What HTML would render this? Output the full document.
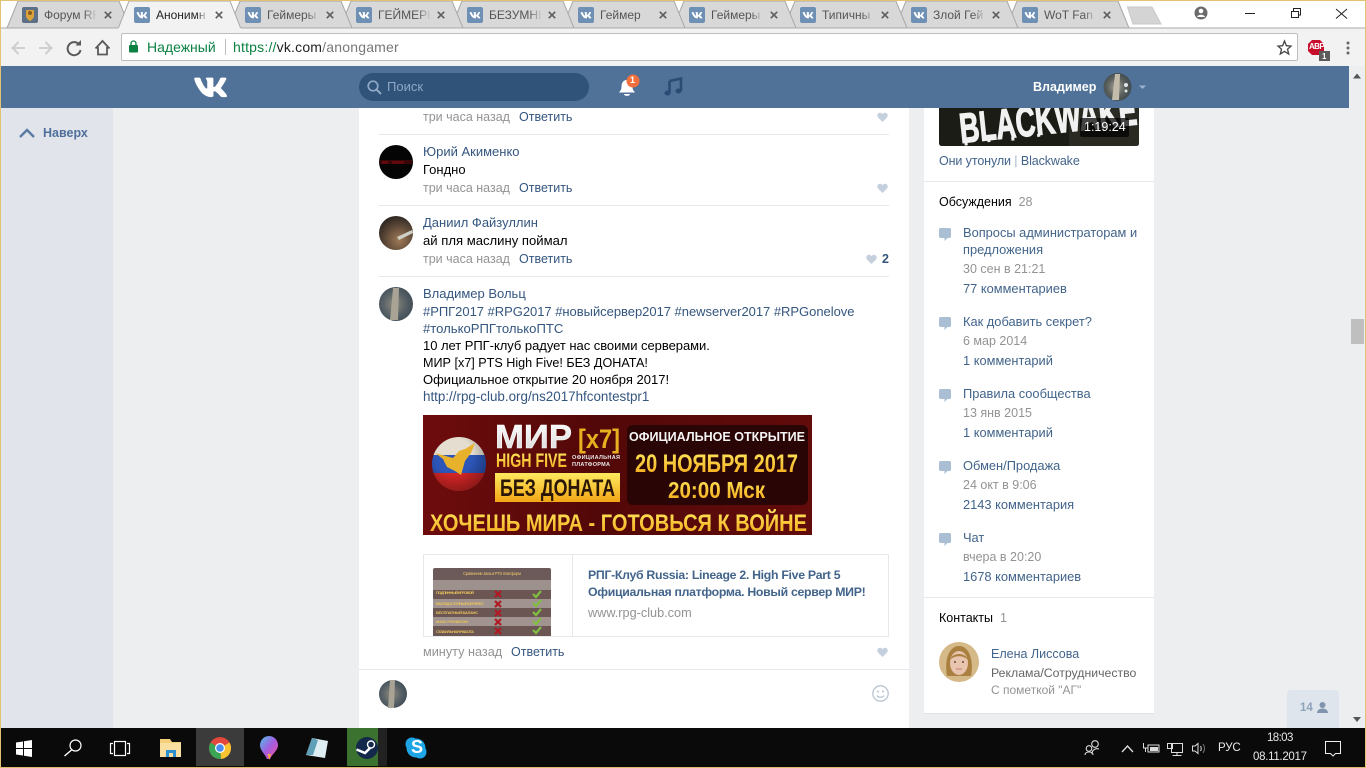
<!DOCTYPE html>
<html><head><meta charset="utf-8"><title>vk</title>
<style>
html,body{margin:0;padding:0;width:1366px;height:768px;overflow:hidden;background:#edeef0}
body{position:relative;font-family:"Liberation Sans","Noto Sans CJK SC",sans-serif;font-size:12.5px;color:#000}
.a{position:absolute}
.t{position:absolute;white-space:nowrap;line-height:17px;height:17px;margin-top:1px}
.l{color:#34567f}.g{color:#939393}.m{color:#42648b}.b{font-weight:bold}
.c{font-size:13px;margin-top:0}.s{font-size:12.85px;margin-top:0}
.tab{position:absolute;top:7px;font-size:12px;line-height:16px;color:#555;width:53px;overflow:hidden;white-space:nowrap;-webkit-mask-image:linear-gradient(90deg,#000 75%,transparent);mask-image:linear-gradient(90deg,#000 75%,transparent)}
.hr{position:absolute;height:1px;background:#e7e8ec}
svg{position:absolute;overflow:visible}
</style></head><body>

<!-- page columns -->
<div class="a" style="left:0;top:108px;width:113px;height:620px;background:#e1e5eb"></div>
<div class="a" style="left:359px;top:108px;width:550px;height:620px;background:#fff"></div>
<div class="a" style="left:924px;top:108px;width:230px;height:605px;background:#fff;box-shadow:0 1px 0 #dfe2e8"></div>

<!-- Tab strip -->
<div class="a" style="left:0;top:0;width:1366px;height:28px;background:#fff"></div>
<svg style="left:0;top:0" width="1366" height="66">
<defs>
<symbol id="vk" viewBox="0 0 16 16"><rect width="16" height="16" rx="2" fill="#6f90b5"/><path transform="scale(.667)" fill="#fff" d="M19.376 17.123h-1.744c-.66 0-.864-.525-2.05-1.727-1.033-1-1.49-1.135-1.744-1.135-.356 0-.458.102-.458.593v1.575c0 .424-.135.678-1.253.678-1.846 0-3.896-1.118-5.335-3.202C4.624 10.857 4.03 8.57 4.03 8.096c0-.254.102-.491.593-.491h1.744c.44 0 .61.203.78.677.863 2.49 2.303 4.675 2.896 4.675.22 0 .322-.102.322-.66V9.721c-.068-1.186-.695-1.287-.695-1.71 0-.204.17-.407.44-.407h2.743c.373 0 .508.203.508.643v3.473c0 .372.17.508.271.508.22 0 .407-.136.813-.542 1.254-1.406 2.151-3.574 2.151-3.574.119-.254.322-.491.763-.491h1.744c.525 0 .644.27.525.643-.22 1.017-2.354 4.031-2.354 4.031-.186.305-.254.44 0 .78.186.254.796.779 1.203 1.253.745.847 1.32 1.558 1.473 2.05.17.49-.085.744-.576.744z"/></symbol>
<symbol id="x" viewBox="0 0 10 10"><path d="M1 1L9 9M9 1L1 9" stroke="#5f5f5f" stroke-width="2.100" fill="none"/></symbol>
</defs>
<g fill="#d8d8d8" stroke="#a8a8a8">
<path d="M1006 28L1017 1H1118L1129 28Z"/>
<path d="M895 28L906 1H1007L1018 28Z"/>
<path d="M784 28L795 1H896L907 28Z"/>
<path d="M673 28L684 1H785L796 28Z"/>
<path d="M562 28L573 1H674L685 28Z"/>
<path d="M451 28L462 1H563L574 28Z"/>
<path d="M340 28L351 1H452L463 28Z"/>
<path d="M229 28L240 1H341L352 28Z"/>
<path d="M7 28L18 1H119L130 28Z"/>
</g>
<path d="M0 28H1366" stroke="#a9a9a9"/>
<path d="M1127.500 7H1152L1161 24H1133Z" fill="#d4d4d4" stroke="#c8c8c8"/>
<path d="M118 29L129 1H230L241 29Z" fill="#f2f2f2" stroke="#a8a8a8"/>
<rect x="0" y="28" width="1366" height="38" fill="#f2f2f2"/>
<path d="M0 28H118M241 28H1366" stroke="#a9a9a9"/>
<rect x="22" y="7" width="16" height="16" rx="2" fill="#5d6f86"/><path d="M26 10H34V16C34 19 30 21 30 21S26 19 26 16Z" fill="#d8a43a"/><circle cx="30" cy="13" r="2" fill="#8c5a20"/>
<use href="#vk" x="134" y="7" width="16" height="16"/><use href="#vk" x="245" y="7" width="16" height="16"/><use href="#vk" x="356" y="7" width="16" height="16"/><use href="#vk" x="467" y="7" width="16" height="16"/><use href="#vk" x="578" y="7" width="16" height="16"/><use href="#vk" x="689" y="7" width="16" height="16"/><use href="#vk" x="800" y="7" width="16" height="16"/><use href="#vk" x="911" y="7" width="16" height="16"/><use href="#vk" x="1022" y="7" width="16" height="16"/>
<use href="#x" x="104" y="11" width="8" height="8"/><use href="#x" x="215" y="11" width="8" height="8"/><use href="#x" x="326" y="11" width="8" height="8"/><use href="#x" x="437" y="11" width="8" height="8"/><use href="#x" x="548" y="11" width="8" height="8"/><use href="#x" x="659" y="11" width="8" height="8"/><use href="#x" x="770" y="11" width="8" height="8"/><use href="#x" x="881" y="11" width="8" height="8"/><use href="#x" x="992" y="11" width="8" height="8"/><use href="#x" x="1103" y="11" width="8" height="8"/>
<circle cx="1201" cy="13" r="6.500" fill="#6b6b6b"/><circle cx="1201" cy="11" r="2.300" fill="#fff"/><path d="M1197 17C1198 14 1204 14 1205 17Z" fill="#fff"/>
<path d="M1245 13.500H1255" stroke="#222"/>
<path d="M1291.500 11.500H1298.500V17.500H1291.500ZM1293.500 11V8.500H1300.500V15H1298.500" fill="none" stroke="#222"/>
<path d="M1336 9L1347 18.500M1347 9L1336 18.500" stroke="#222"/>
<g fill="none" stroke="#cfcfcf" stroke-width="2"><path d="M25 48H13M18.500 42L12.500 48L18.500 54"/><path d="M39 48H51M45.500 42L51.500 48L45.500 54"/></g>
<path d="M79.500 45A6.500 6.500 0 1 0 80.500 50" fill="none" stroke="#5a5a5a" stroke-width="2"/><path d="M75.500 45.500H81V40Z" fill="#5a5a5a"/>
<path d="M95.500 48.500L102.500 41L109.500 48.500M98 47V54.500H107V47" fill="none" stroke="#5a5a5a" stroke-width="1.800"/>
</svg>

<!-- omnibox -->
<div class="a" style="left:121px;top:33px;width:1175px;height:26px;background:#fff;border:1px solid #bdbdbd;border-radius:2px"></div>
<svg style="left:0;top:0" width="1366" height="66">
<rect x="129" y="45" width="9" height="7.500" rx="1" fill="#0b8043"/><path d="M131 45.500V43.500A2.500 2.500 0 0 1 136 43.500V45.500" fill="none" stroke="#0b8043" stroke-width="1.300"/>
<path d="M225.500 39V55" stroke="#bdbdbd"/>
<path d="M1284.500 41L1286.400 45.700L1291 46.100L1287.500 49.200L1288.700 54L1284.500 51.400L1280.300 54L1281.500 49.200L1278 46.100L1282.600 45.700Z" fill="none" stroke="#444" stroke-width="1.300"/>
<path d="M1312 40H1320L1324 44V51L1320 55H1312L1308 51V44Z" fill="#c70d2c"/>
</svg>
<div class="t" style="left:1309px;top:37px;font-size:8px;font-weight:bold;color:#fff;letter-spacing:-.6px">ABP</div>
<div class="a" style="left:1319px;top:51px;width:11px;height:10px;background:#5b5b5b"></div>
<div class="t" style="left:1322px;top:47px;font-size:8px;font-weight:bold;color:#fff">1</div>
<svg style="left:0;top:0" width="1366" height="66"><g fill="#666"><circle cx="1348" cy="43" r="1.500"/><circle cx="1348" cy="48" r="1.500"/><circle cx="1348" cy="53" r="1.500"/></g></svg>
<div class="t" style="left:147px;top:38px;font-size:14px;color:#0b8043">Надежный</div>
<div class="t" style="left:233px;top:38px;font-size:14px;letter-spacing:.2px;color:#777"><span style="color:#0b8043">https://</span><span style="color:#222">vk.com</span>/anongamer</div>

<!-- tab text -->
<div class="tab" style="left:44px">Форум RF</div>
<div class="tab" style="left:156px;color:#222">Анонимн</div>
<div class="tab" style="left:267px">Геймеры</div>
<div class="tab" style="left:378px">ГЕЙМЕРЫ</div>
<div class="tab" style="left:489px">БЕЗУМНЫ</div>
<div class="tab" style="left:600px">Геймер</div>
<div class="tab" style="left:711px">Геймеры</div>
<div class="tab" style="left:822px">Типичны</div>
<div class="tab" style="left:933px">Злой Гей</div>
<div class="tab" style="left:1044px">WoT Fan</div>

<!-- VK header -->
<div class="a" style="left:1px;top:66px;width:1348px;height:42px;background:#507299"></div>
<svg style="left:0;top:0" width="1366" height="108">
<path transform="translate(186 62) scale(2.050)" fill="#fff" d="M19.376 17.123h-1.744c-.66 0-.864-.525-2.05-1.727-1.033-1-1.49-1.135-1.744-1.135-.356 0-.458.102-.458.593v1.575c0 .424-.135.678-1.253.678-1.846 0-3.896-1.118-5.335-3.202C4.624 10.857 4.03 8.57 4.03 8.096c0-.254.102-.491.593-.491h1.744c.44 0 .61.203.78.677.863 2.49 2.303 4.675 2.896 4.675.22 0 .322-.102.322-.66V9.721c-.068-1.186-.695-1.287-.695-1.71 0-.204.17-.407.44-.407h2.743c.373 0 .508.203.508.643v3.473c0 .372.17.508.271.508.22 0 .407-.136.813-.542 1.254-1.406 2.151-3.574 2.151-3.574.119-.254.322-.491.763-.491h1.744c.525 0 .644.27.525.643-.22 1.017-2.354 4.031-2.354 4.031-.186.305-.254.44 0 .78.186.254.796.779 1.203 1.253.745.847 1.32 1.558 1.473 2.05.17.49-.085.744-.576.744z"/>
<rect x="359" y="73" width="230" height="28" rx="14" fill="#2f5379"/>
<circle cx="373" cy="86" r="4.800" fill="none" stroke="#8fa7c4" stroke-width="1.700"/><path d="M376.500 89.500L381 94" stroke="#8fa7c4" stroke-width="2"/>
<path d="M627 80C622.500 80 621.500 84 621.500 87C621.500 90 620 91 619 92.500H635C634 91 632.500 90 632.500 87C632.500 84 631.500 80 627 80Z" fill="#fff"/><path d="M624 94H630C630 96.500 624 96.500 624 94Z" fill="#fff"/>
<circle cx="633" cy="81" r="6.500" fill="#f26f3e"/>
<path d="M669.500 81L681 78.500V91" fill="none" stroke="#2a4b73" stroke-width="2.600"/><path d="M669.500 81V93" stroke="#2a4b73" stroke-width="2.600"/>
<ellipse cx="667.500" cy="93" rx="3" ry="2.500" fill="#2a4b73"/><ellipse cx="678.500" cy="91" rx="3" ry="2.500" fill="#2a4b73"/>
<defs><radialGradient id="av" cx=".45" cy=".5" r=".7"><stop offset="0" stop-color="#a8a59a"/><stop offset=".45" stop-color="#5d625f"/><stop offset="1" stop-color="#2f3a42"/></radialGradient></defs>
<circle cx="1117.500" cy="87" r="14" fill="url(#av)"/><path d="M1115 74L1120 74L1119 100L1112 100Z" fill="#c3bcab"/><circle cx="1126" cy="85" r="2" fill="#dfe6ea"/><circle cx="1126" cy="91" r="1.500" fill="#dfe6ea"/>
<path d="M1139 85.500H1146L1142.500 89Z" fill="#9db3cd"/>
<path d="M1353 77.500H1361L1357 72.500Z" fill="#555" transform="translate(0 1)"/>
<path d="M1353 717H1361L1357 722Z" fill="#555"/>
</svg>
<div class="t" style="left:387px;top:77px;font-size:13px;color:#8fa7c4">Поиск</div>
<div class="t" style="left:630px;top:71px;font-size:9px;font-weight:bold;color:#fff">1</div>
<div class="t b" style="left:1033px;top:78px;color:#fff;font-size:12.500px">Владимер</div>

<!-- scrollbar -->
<div class="a" style="left:1349px;top:66px;width:16px;height:662px;background:#f1f1f1;z-index:-1"></div>
<div class="a" style="left:1351px;top:319px;width:13px;height:25px;background:#bfbfbf"></div>

<!-- left -->
<svg style="left:0;top:100px" width="113" height="50"><path d="M20 37L27 30L34 37" fill="none" stroke="#5a7ba3" stroke-width="2.400"/></svg>
<div class="t b" style="left:43px;top:124px;color:#4f6f9a;font-size:12.500px">Наверх</div>

<!-- comments -->
<div class="t g" style="left:423px;top:108px">три часа назад</div><div class="t l" style="left:519px;top:108px">Ответить</div>
<div class="hr" style="left:379px;top:134px;width:510px"></div>

<svg style="left:379px;top:145px" width="34" height="34"><circle cx="17" cy="17" r="17" fill="#050505"/><rect x="1" y="15" width="32" height="4" fill="#3a0709"/><rect x="3" y="16" width="6" height="3" fill="#62090d"/><rect x="13" y="16" width="12" height="3" fill="#62090d"/></svg>
<div class="t l c" style="left:423px;top:143px">Юрий Акименко</div>
<div class="t c" style="left:423px;top:161px">Гондно</div>
<div class="t g" style="left:423px;top:179px">три часа назад</div><div class="t l" style="left:519px;top:179px">Ответить</div>
<div class="hr" style="left:379px;top:205px;width:510px"></div>

<svg style="left:379px;top:216px" width="34" height="34"><defs><radialGradient id="da" cx=".6" cy=".7" r=".7"><stop offset="0" stop-color="#a07a58"/><stop offset="1" stop-color="#2f2722"/></radialGradient></defs><circle cx="17" cy="17" r="17" fill="url(#da)"/><path d="M18 21L33 14L34 17L20 24Z" fill="#cfcfc6"/></svg>
<div class="t l c" style="left:423px;top:214px">Даниил Файзуллин</div>
<div class="t" style="left:423px;top:232px;font-size:13.100px;margin-top:0">ай пля маслину поймал</div>
<div class="t g" style="left:423px;top:250px">три часа назад</div><div class="t l" style="left:519px;top:250px">Ответить</div>
<div class="t l b" style="left:882px;top:250px">2</div>
<div class="hr" style="left:379px;top:276px;width:510px"></div>

<svg style="left:379px;top:287px" width="34" height="34"><defs><radialGradient id="vl" cx=".45" cy=".5" r=".7"><stop offset="0" stop-color="#8f8b7e"/><stop offset=".5" stop-color="#566066"/><stop offset="1" stop-color="#33414b"/></radialGradient></defs><circle cx="17" cy="17" r="17" fill="url(#vl)"/><path d="M14 1L20 1L19 33L11 33Z" fill="#a8a394"/></svg>
<div class="t l c" style="left:423px;top:285px">Владимер Вольц</div>
<div class="t l c" style="left:423px;top:303px;letter-spacing:-.03px">#РПГ2017 #RPG2017 #новыйсервер2017 #newserver2017 #RPGonelove</div>
<div class="t l" style="left:423px;top:320px;font-size:13.100px;margin-top:0">#толькоРПГтолькоПТС</div>
<div class="t c" style="left:423px;top:337px;letter-spacing:-.04px">10 лет РПГ-клуб радует нас своими серверами.</div>
<div class="t" style="left:423px;top:354px;font-size:12.600px">МИР [x7] PTS High Five! БЕЗ ДОНАТА!</div>
<div class="t c" style="left:423px;top:371px">Официальное открытие 20 ноября 2017!</div>
<div class="t l" style="left:423px;top:388px;font-size:13.400px;margin-top:0">http://rpg-club.org/ns2017hfcontestpr1</div>

<!-- hearts -->
<svg style="left:0;top:0" width="1366" height="768">
<defs><path id="h" d="M5.500 10L1 5.500C-.5 3.500 .5 .8 3 .8C4.300 .8 5 1.500 5.500 2.300C6 1.500 6.700 .8 8 .8C10.500 .8 11.500 3.500 10 5.500Z" fill="#c5d0de"/></defs>
<use href="#h" x="877" y="112"/><use href="#h" x="877" y="183"/><use href="#h" x="866" y="254"/><use href="#h" x="877" y="647"/>
</svg>

<!-- Banner -->
<svg style="left:423px;top:415px" width="389" height="120" viewBox="0 0 389 120" font-family="'Liberation Sans',sans-serif" font-weight="bold">
<defs>
<linearGradient id="ban" x1="0" x2="1" y1="0" y2="0"><stop offset="0" stop-color="#6e0c0c"/><stop offset=".45" stop-color="#520808"/><stop offset="1" stop-color="#620b0b"/></linearGradient>
<linearGradient id="yl" x1="0" x2="0" y1="0" y2="1"><stop offset="0" stop-color="#ffe95e"/><stop offset="1" stop-color="#f2a516"/></linearGradient>
<linearGradient id="wh" x1="0" x2="0" y1="0" y2="1"><stop offset="0" stop-color="#fff"/><stop offset="1" stop-color="#d8d8d8"/></linearGradient>
<radialGradient id="gs" cx=".4" cy=".35" r=".7"><stop offset=".5" stop-color="#000" stop-opacity="0"/><stop offset="1" stop-color="#000" stop-opacity=".35"/></radialGradient>
<clipPath id="gl"><circle cx="36" cy="49" r="27"/></clipPath>
</defs>
<rect width="389" height="120" fill="url(#ban)"/>
<g clip-path="url(#gl)"><rect x="9" y="22" width="54" height="18" fill="#e4ddd0"/><rect x="9" y="40" width="54" height="18" fill="#2c55b8"/><rect x="9" y="58" width="54" height="18" fill="#d22525"/><circle cx="36" cy="49" r="27" fill="url(#gs)"/></g>
<path d="M12 38L30 43L36 36L42 34L52 28L48 38L42 46L38 60L32 56L24 52L20 44Z" fill="#e8b12c"/>
<rect x="204" y="10" width="181" height="80" rx="6" fill="#2a0505"/>
<text x="72" y="33" font-size="33" fill="url(#wh)" stroke="#fff" stroke-width=".5" textLength="77" lengthAdjust="spacingAndGlyphs">МИР</text>
<text x="155" y="33" font-size="27" fill="#e8b020" textLength="42" lengthAdjust="spacingAndGlyphs">[x7]</text>
<text x="73" y="52" font-size="19" fill="url(#yl)" textLength="71" lengthAdjust="spacingAndGlyphs">HIGH FIVE</text>
<text x="149" y="44" font-size="5.500" fill="#e8e8e8" textLength="48">ОФИЦИАЛЬНАЯ</text>
<text x="149" y="51" font-size="5.500" fill="#e8e8e8" textLength="38">ПЛАТФОРМА</text>
<rect x="72" y="58" width="125" height="29" fill="url(#yl)"/>
<text x="77" y="81" font-size="24" fill="#2a1605" textLength="115" lengthAdjust="spacingAndGlyphs">БЕЗ ДОНАТА</text>
<text x="206" y="26" font-size="12.500" fill="#f4f4f4" textLength="176" lengthAdjust="spacingAndGlyphs">ОФИЦИАЛЬНОЕ ОТКРЫТИЕ</text>
<text x="212" y="57" font-size="25" fill="url(#yl)" textLength="163" lengthAdjust="spacingAndGlyphs">20 НОЯБРЯ 2017</text>
<text x="245" y="83" font-size="23" fill="url(#yl)" textLength="97" lengthAdjust="spacingAndGlyphs">20:00 Мск</text>
<text x="7" y="116" font-size="24" fill="url(#yl)" textLength="377" lengthAdjust="spacingAndGlyphs">ХОЧЕШЬ МИРА - ГОТОВЬСЯ К ВОЙНЕ</text>
</svg>

<!-- link card -->
<div class="a" style="left:423px;top:554px;width:464px;height:81px;border:1px solid #e7e8ec"></div>
<div class="a" style="left:572px;top:555px;width:1px;height:81px;background:#e7e8ec"></div>
<svg style="left:433px;top:568px" width="118" height="68" viewBox="0 0 118 68" font-family="'Liberation Sans',sans-serif">
<rect width="118" height="68" rx="2" fill="#6c5a5a"/>
<rect y="12" width="118" height="10" fill="#9d918e"/>
<rect y="22" width="118" height="10" fill="#6b5654"/>
<rect y="31" width="118" height="9" fill="#a09390"/>
<rect y="40" width="118" height="9" fill="#6b5654"/>
<rect y="49" width="118" height="9" fill="#a09390"/>
<rect y="58" width="118" height="10" fill="#6b5654"/>
<text x="30" y="7" font-size="4.500" fill="#e5c06a" textLength="58">Сравнение Java и PTS платформ</text>
<g font-size="4" fill="#e9c35a" font-weight="bold"><text x="3" y="26" textLength="38">ПОДЛИННЫЙ ИГРОВОЙ</text><text x="3" y="37" textLength="48">ВАСЯ ДОСТУПНЫЙ ИНТЕРЕС</text><text x="3" y="46" textLength="42">БЕСПЛАТНЫЙ БАЛАНС</text><text x="3" y="55" textLength="32">МАКС PVE/ВАТАН</text><text x="3" y="65" textLength="38">СТАБИЛЬНАЯ РАБОТА</text></g>
<g stroke="#b01a22" stroke-width="2.200"><path d="M62 23L68 29M68 23L62 29M62 33L68 39M68 33L62 39M62 42L68 48M68 42L62 48M62 51L68 57M68 51L62 57M62 60L68 66M68 60L62 66"/></g>
<g fill="none" stroke="#7fc040" stroke-width="2.200"><path d="M100 26L103 29L108 23M100 35L103 38L108 32M100 44L103 47L108 41M100 53L103 56L108 50M100 62L103 65L108 59"/></g>
</svg>
<div class="t m b" style="left:588px;top:566px;font-size:12.300px;letter-spacing:-.3px">РПГ-Клуб Russia: Lineage 2. High Five Part 5</div>
<div class="t m b" style="left:588px;top:583px;font-size:12.300px;letter-spacing:-.3px">Официальная платформа. Новый сервер МИР!</div>
<div class="t g" style="left:588px;top:604px;font-size:12.700px">www.rpg-club.com</div>
<div class="t g" style="left:423px;top:643px;font-size:12.700px">минуту назад</div><div class="t l" style="left:511px;top:643px">Ответить</div>
<div class="hr" style="left:359px;top:669px;width:550px"></div>

<!-- reply -->
<svg style="left:379px;top:680px" width="28" height="28"><circle cx="14" cy="14" r="14" fill="url(#vl)"/><path d="M11 0L16 0L15 28L9 28Z" fill="#a8a394"/></svg>
<svg style="left:872px;top:685px" width="17" height="17"><circle cx="8.500" cy="8.500" r="7.700" fill="none" stroke="#b8c4d2" stroke-width="1.300"/><circle cx="6" cy="6.500" r="1" fill="#b8c4d2"/><circle cx="11" cy="6.500" r="1" fill="#b8c4d2"/><path d="M5 10.500C6.500 12.800 10.500 12.800 12 10.500" fill="none" stroke="#b8c4d2" stroke-width="1.200"/></svg>

<!-- right column -->
<svg style="left:939px;top:108px;overflow:hidden" width="200" height="38" viewBox="0 0 200 38" font-family="'Liberation Sans',sans-serif" font-weight="bold">
<defs><clipPath id="cv"><path d="M0 0H200V35Q200 38 197 38H3Q0 38 0 35Z"/></clipPath></defs>
<g clip-path="url(#cv)"><rect width="200" height="38" fill="#1c1c16"/><rect x="130" width="70" height="38" fill="#2a2a22"/>
<g transform="rotate(-6 22 35)"><text x="22" y="35" font-size="42" fill="#f1f1f1" stroke="#f1f1f1" stroke-width="1.200" textLength="178" lengthAdjust="spacingAndGlyphs">BLACKWAKE</text>
<path d="M27 34V38M50 34V37M74 34V38M100 34V37" stroke="#f1f1f1" stroke-width="3"/></g>
<rect x="141" y="10" width="49" height="19" rx="2" fill="#000" fill-opacity=".72"/></g>
</svg>
<div class="t" style="left:1084px;top:118px;color:#fff;font-size:12.500px">1:19:24</div>
<div class="t m" style="left:939px;top:152px;letter-spacing:-.1px">Они утонули <span style="color:#a8b8c9">|</span> Blackwake</div>
<div class="hr" style="left:924px;top:181px;width:230px"></div>
<div class="t" style="left:939px;top:193px">Обсуждения &nbsp;<span class="g">28</span></div>

<svg style="left:0;top:0" width="1366" height="768">
<defs><path id="c" d="M1.500 0H10.500C11.300 0 12 .7 12 1.500V8.500C12 9.300 11.300 10 10.500 10H8.500L5.500 13V10H1.500C.7 10 0 9.300 0 8.500V1.500C0 .7 .7 0 1.500 0Z" fill="#aabfd4"/></defs>
<use href="#c" x="939" y="228"/><use href="#c" x="939" y="317"/><use href="#c" x="939" y="389"/><use href="#c" x="939" y="461"/><use href="#c" x="939" y="533"/>
</svg>

<div class="t m s" style="left:963px;top:224px">Вопросы администраторам и</div>
<div class="t m s" style="left:963px;top:241px">предложения</div>
<div class="t g" style="left:963px;top:260px">30 сен в 21:21</div>
<div class="t m s" style="left:963px;top:280px">77 комментариев</div>

<div class="t m s" style="left:963px;top:313px">Как добавить секрет?</div>
<div class="t g" style="left:963px;top:332px">6 мар 2014</div>
<div class="t m s" style="left:963px;top:352px">1 комментарий</div>

<div class="t m s" style="left:963px;top:385px">Правила сообщества</div>
<div class="t g" style="left:963px;top:404px">13 янв 2015</div>
<div class="t m s" style="left:963px;top:424px">1 комментарий</div>

<div class="t m s" style="left:963px;top:457px">Обмен/Продажа</div>
<div class="t g" style="left:963px;top:476px">24 окт в 9:06</div>
<div class="t m s" style="left:963px;top:496px">2143 комментария</div>

<div class="t m s" style="left:963px;top:529px">Чат</div>
<div class="t g" style="left:963px;top:548px">вчера в 20:20</div>
<div class="t m s" style="left:963px;top:568px">1678 комментариев</div>

<div class="hr" style="left:924px;top:597px;width:230px"></div>
<div class="t" style="left:939px;top:609px">Контакты &nbsp;<span class="g">1</span></div>
<svg style="left:939px;top:642px" width="40" height="40"><circle cx="20" cy="20" r="20" fill="#d6b988"/><path d="M8 34C5 18 10 4 20 4C30 4 35 18 32 34Z" fill="#a9803f"/><ellipse cx="20" cy="21" rx="9" ry="12" fill="#e9c4ae"/><path d="M11 18C13 10 27 10 29 18C25 13 15 13 11 18Z" fill="#a9803f"/><circle cx="16" cy="20" r="1" fill="#6a4a3a"/><circle cx="24" cy="20" r="1" fill="#6a4a3a"/><path d="M17 27H23" stroke="#c47f72"/></svg>
<div class="t m" style="left:991px;top:645px">Елена Лиссова</div>
<div class="t" style="left:991px;top:664px;color:#656565;font-size:12.300px">Реклама/Сотрудничество</div>
<div class="t g" style="left:991px;top:681px;font-size:12px">С пометкой "АГ"</div>

<!-- friends widget -->
<div class="a" style="left:1287px;top:690px;width:52px;height:38px;background:#dfe5ec;border-radius:4px 4px 0 0"></div>
<div class="t b" style="left:1300px;top:699px;color:#8fa3bb;font-size:11.500px">14</div>
<svg style="left:1317px;top:702px" width="11" height="11"><circle cx="5.500" cy="3" r="3" fill="#8094ad"/><path d="M0 11C0 5 11 5 11 11Z" fill="#8094ad"/></svg>

<!-- window border -->
<div class="a" style="left:0;top:0;width:1366px;height:1px;background:#e3c372"></div>
<div class="a" style="left:0;top:0;width:1px;height:768px;background:#e3c372"></div>
<div class="a" style="left:1365px;top:0;width:1px;height:768px;background:#e3c372"></div>

<!-- Taskbar -->
<div class="a" style="left:1px;top:728px;width:1364px;height:39px;background:#0a0a0a"></div>
<div class="a" style="left:0;top:767px;width:1366px;height:1px;background:#dcbc6c"></div>
<div class="a" style="left:196px;top:728px;width:48px;height:38px;background:#3b3b3b"></div>
<div class="a" style="left:347px;top:728px;width:31px;height:38px;background:#3c7230"></div>
<div class="a" style="left:378px;top:728px;width:9px;height:38px;background:#222"></div>
<svg style="left:0;top:728px" width="1366" height="40" viewBox="0 728 1366 40">
<g fill="#fff"><path d="M16 742.500L23 741.500V748H16ZM24 741.300L32 740V748H24ZM16 749H23V755.500L16 754.500ZM24 749H32V757L24 755.700Z"/></g>
<circle cx="75.500" cy="745.500" r="5.500" fill="none" stroke="#fff" stroke-width="1.200"/><path d="M71.500 750L64.500 756" stroke="#fff" stroke-width="1.400"/>
<g fill="none" stroke="#fff" stroke-width="1.200"><rect x="114.500" y="741.500" width="11" height="14"/><path d="M113 743.500H110.500V753.500H113M127 743.500H129.500V753.500H127"/></g>
<path d="M160 739H170L172 742H181V757H160Z" fill="#f5d07a"/><rect x="160" y="743" width="21" height="14" fill="#f9e0a0"/><rect x="166" y="750" width="10" height="7" fill="#2e8fd0"/><rect x="169" y="753" width="4" height="4" fill="#f9e0a0"/>
<circle cx="220" cy="748" r="11" fill="#e2483d"/><path d="M220 748L229.500 742.500A11 11 0 0 1 221 759Z" fill="#f9c332"/><path d="M220 748L221 759A11 11 0 0 1 210.500 742.500Z" fill="#3aa655"/><circle cx="220" cy="748" r="5" fill="#fff"/><circle cx="220" cy="748" r="3.800" fill="#4a8cf0"/>
<defs><linearGradient id="pt" x1="0" x2="1" y1="0" y2="1"><stop offset="0" stop-color="#4bc0e8"/><stop offset=".5" stop-color="#a55de0"/><stop offset="1" stop-color="#f0509a"/></linearGradient></defs>
<path d="M269 736C263 736 260 741 260 745.500C260 750.500 265 754 267 759L270 759C272 754 278 750.500 278 745.500C278 741 275 736 269 736Z" fill="url(#pt)"/><path d="M267.500 754L271 754L269.500 760Z" fill="#f2a93c"/>
<path d="M312 738L328 741L325 758L306 755Z" fill="#dfeef2"/><path d="M312 738L318 740L313 755L306 755Z" fill="#5f9fb8"/>
<circle cx="367" cy="748" r="11" fill="#13284a"/><circle cx="371" cy="744.500" r="3.500" fill="none" stroke="#fff" stroke-width="1.400"/><path d="M356.500 749.500L365 753L370 748" fill="none" stroke="#fff" stroke-width="2.500"/>
<circle cx="412" cy="744" r="6.500" fill="#1ea5e6"/><circle cx="420" cy="752" r="6.500" fill="#1ea5e6"/><circle cx="416" cy="748" r="9.500" fill="#1ea5e6"/>
<g fill="none" stroke="#ddd" stroke-width="1.100"><circle cx="1095" cy="744" r="3.300"/><path d="M1092 754C1092 749.500 1096 748 1099 749"/><circle cx="1089" cy="748.500" r="2.800"/><path d="M1085 755C1085 751 1093 751 1093 755"/></g>
<path d="M1122 752L1127.500 746L1133 752" fill="none" stroke="#ddd" stroke-width="1.300"/>
<rect x="1148" y="745" width="11" height="7" fill="#0a0a0a" stroke="#ddd"/><rect x="1150" y="747" width="8" height="4" fill="#ddd"/><path d="M1143.500 743V748H1148M1145.500 748V752" stroke="#ddd" fill="none"/>
<g fill="none" stroke="#ddd"><rect x="1171.500" y="743.500" width="11" height="9"/><rect x="1167.500" y="743.500" width="5" height="5"/><path d="M1177 752.500V755.500M1172.500 755.500H1181.500"/></g>
<path d="M1192.500 746H1195L1198 743.500V753.500L1195 751H1192.500Z" fill="none" stroke="#ddd"/><path d="M1200.500 746Q1202 748.500 1200.500 751" fill="none" stroke="#ddd"/><path d="M1203 744Q1206 748.500 1203 753" fill="none" stroke="#777"/>
<path d="M1325.500 741.500H1340.500V753.500H1335.500L1333 756L1330.500 753.500H1325.500Z" fill="none" stroke="#eee"/>
</svg>
<div class="t" style="left:411px;top:736px;color:#fff;font-weight:bold;font-size:18px;line-height:20px;height:20px">S</div>
<div class="t" style="left:1218px;top:739px;color:#e8e8e8;font-size:11.500px;letter-spacing:-.2px">РУС</div>
<div class="t" style="left:1267px;top:729px;color:#e8e8e8;font-size:11.500px;letter-spacing:-.6px">18:03</div>
<div class="t" style="left:1253px;top:748px;color:#e8e8e8;font-size:11.500px;letter-spacing:-.3px">08.11.2017</div>
</body></html>
